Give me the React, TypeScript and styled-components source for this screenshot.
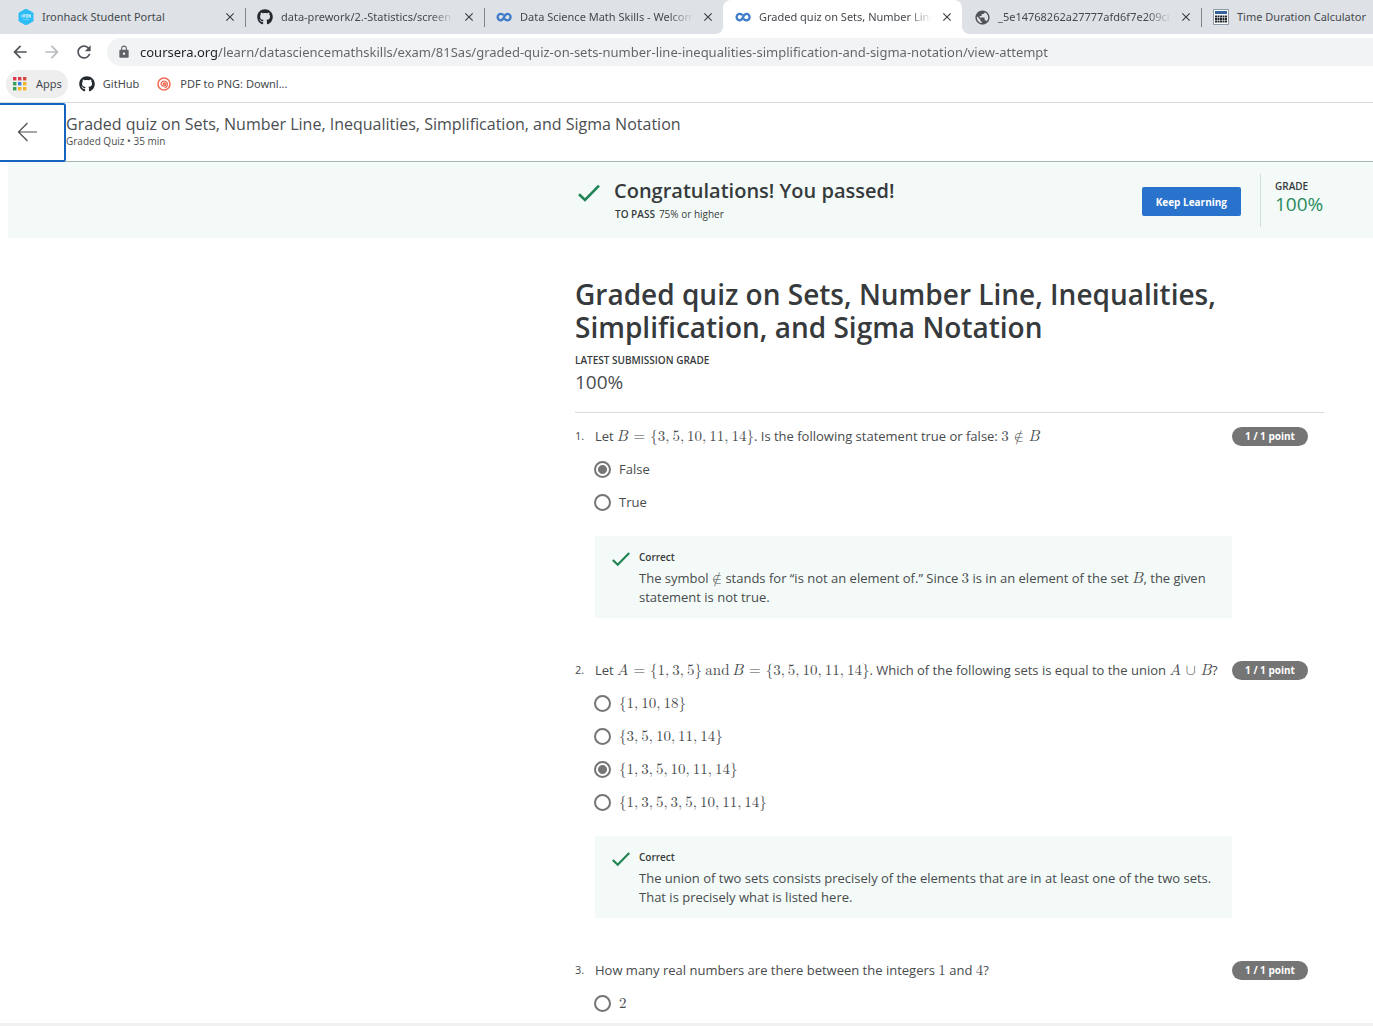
import React from "react";
import styled, { createGlobalStyle, css } from "styled-components";
import { MdArrowBack, MdArrowForward, MdClose, MdLock, MdPublic, MdRefresh } from "react-icons/md";
import { FaGithub } from "react-icons/fa";

const GlobalStyle = createGlobalStyle`
  *, *::before, *::after { box-sizing: border-box; }
  body {
    margin: 0;
    background: #fff;
    color: #373a3c;
    font: 400 13px/19px "Open Sans", "Noto Sans", sans-serif;
  }
  h1, h2, p { margin: 0; }
  button, input { font: inherit; color: inherit; }
  svg { flex: none; }
`;

const Page = styled.div`
  display: flex;
  flex-direction: column;
  min-height: 100vh;
  overflow-x: hidden;
`;

/* ---------- browser chrome ---------- */

const TabStrip = styled.div`
  display: flex;
  height: 34px;
  padding-left: 6px;
  overflow: hidden;
  background: #dee1e6;
`;

const Tab = styled.div<{ $active?: boolean; $divided?: boolean }>`
  position: relative;
  display: flex;
  flex: none;
  align-items: center;
  width: 239px;
  height: 34px;
  padding: 0 8px 0 12px;
  color: #45494d;
  font: 400 11px/16px "Noto Sans", "Open Sans", sans-serif;

  ${(p) =>
    p.$divided &&
    css`
      &::before {
        position: absolute;
        left: 0;
        top: 8px;
        width: 1px;
        height: 19px;
        background: #808488;
        content: "";
      }
    `}

  ${(p) =>
    p.$active &&
    css`
      border-radius: 8px 8px 0 0;
      background: #fff;

      &::before,
      &::after {
        position: absolute;
        bottom: 0;
        width: 8px;
        height: 8px;
        content: "";
      }
      &::before {
        right: 100%;
        background: radial-gradient(circle at 0 0, transparent 8px, #fff 8px);
      }
      &::after {
        left: 100%;
        background: radial-gradient(circle at 100% 0, transparent 8px, #fff 8px);
      }
    `}
`;

const TabIcon = styled.span`
  display: flex;
  flex: none;
  width: 16px;
  margin-right: 8px;
`;

const TabTitle = styled.span<{ $fade?: boolean }>`
  flex: 1;
  min-width: 0;
  margin-right: 8px;
  overflow: hidden;
  white-space: nowrap;
  ${(p) => p.$fade && css`mask-image: linear-gradient(to left, transparent, #000 24px);`}
`;

const IconButton = styled.button<{ $size: number; $color?: string }>`
  display: flex;
  flex: none;
  align-items: center;
  justify-content: center;
  width: ${(p) => p.$size}px;
  height: ${(p) => p.$size}px;
  padding: 0;
  border: 0;
  background: none;
  color: ${(p) => p.$color ?? "#505357"};
`;

const Toolbar = styled.div`
  display: flex;
  align-items: center;
  gap: 12px;
  height: 36px;
  padding-left: 10px;
`;

const AddressBar = styled.label`
  display: flex;
  flex: 1;
  align-items: center;
  gap: 9px;
  height: 28px;
  margin-left: 1px;
  padding-left: 10px;
  border-radius: 14px 0 0 14px;
  background: #f1f3f4;
  color: #5f6368;
`;

const AddressInput = styled.input`
  flex: 1;
  min-width: 0;
  padding: 0;
  border: 0;
  outline: 0;
  background: linear-gradient(to right, #202124 77px, #5f6368 77px);
  background-clip: text;
  -webkit-text-fill-color: transparent;
  font: 400 13px/20px "Noto Sans", "Open Sans", sans-serif;
`;

const Bookmarks = styled.nav`
  display: flex;
  align-items: center;
  gap: 5px;
  height: 33px;
  padding: 0 6px 4px;
  border-bottom: 1px solid #d9dbde;
`;

const Bookmark = styled.a<{ $pill?: boolean }>`
  display: flex;
  align-items: center;
  gap: 8px;
  height: 28px;
  padding: 0 6px;
  border-radius: 14px;
  background: ${(p) => (p.$pill ? "#eeeeee" : "none")};
  color: #45494d;
  font: 400 11px/16px "Noto Sans", "Open Sans", sans-serif;
  text-decoration: none;
`;

/* ---------- page header ---------- */

const Header = styled.header`
  display: flex;
  height: 59px;
  border-bottom: 1px solid #a5b9b1;
`;

const BackButton = styled.button`
  display: flex;
  align-items: center;
  width: 66px;
  height: 59px;
  padding: 0 0 2px 17px;
  border: 2px solid #1564bd;
  border-left: 0;
  border-radius: 0 3px 3px 0;
  background: #fff;
`;

const HeaderTitle = styled.div`
  padding-top: 11px;
  font: 400 16px/20px "Open Sans", sans-serif;
  color: #4b4e50;
`;

const HeaderMeta = styled.div`
  font: 400 10px/15px "Open Sans", sans-serif;
  color: #4b4e50;
`;

/* ---------- result banner ---------- */

const Banner = styled.section`
  display: flex;
  align-items: center;
  height: 76px;
  margin-left: 8px;
  padding: 0 49px 0 570px;
  background: #f3faf8;
`;

const BannerText = styled.div`
  display: grid;
  flex: 1;
  grid-template-columns: 22px 1fr;
  column-gap: 14px;
  align-items: end;
  padding-bottom: 2px;
`;

const BannerTitle = styled.h2`
  font: 600 20px/26px "Open Sans", sans-serif;
`;

const SmallLabel = styled.span`
  font: 600 10px/14px "Open Sans", sans-serif;
`;

const PassLine = styled.p`
  display: flex;
  grid-column: 2;
  gap: 4px;
  margin: 3px 0 0 1px;
  font: 400 10px/14px "Open Sans", sans-serif;
`;

const KeepLearning = styled.button`
  height: 29px;
  padding: 0 14px;
  margin: 3px 19px 0 0;
  border: 0;
  border-radius: 2px;
  background: #2a73cc;
  color: #fff;
  font: 700 10px/14px "Open Sans", sans-serif;
`;

const GradeBox = styled.div`
  display: flex;
  flex-direction: column;
  width: 64px;
  height: 53px;
  padding: 5px 0 0 14px;
  border-left: 1px solid #d5dedb;
`;

const Score = styled.span<{ $green?: boolean }>`
  color: ${(p) => (p.$green ? "#2a8a5e" : "#4b4e50")};
  font: 400 19px/22px "Open Sans", sans-serif;
`;

/* ---------- quiz ---------- */

const Quiz = styled.main`
  flex: 1;
  padding: 40px 49px 3px 575px;
`;

const QuizTitle = styled.h1`
  font: 600 28px/33px "Open Sans", sans-serif;
`;

const Submission = styled.div`
  display: flex;
  flex-direction: column;
  gap: 4px;
  padding: 9px 0 19px;
  border-bottom: 1px solid #dcdcdc;
`;

const QuestionList = styled.ol`
  display: flex;
  flex-direction: column;
  gap: 42px;
  margin: 0;
  padding: 13px 0 0;
  list-style: none;
`;

const Question = styled.li`
  display: grid;
  grid-template-columns: 20px 1fr 92px;
  align-items: start;
  color: #484b4d;
`;

const QuestionNumber = styled.span`
  font: 400 11px/19px "Open Sans", sans-serif;
`;

const QuestionBody = styled.fieldset`
  min-width: 0;
  margin: 0;
  padding: 0;
  border: 0;
`;

const Prompt = styled.legend`
  height: 20px;
  margin-bottom: 7px;
  padding: 0;
  line-height: 20px;
  white-space: nowrap;
`;

const Points = styled.span`
  justify-self: start;
  width: 76px;
  height: 19px;
  margin-top: 1px;
  border-radius: 10px;
  background: #757575;
  color: #fff;
  font: 700 10px/19px "Open Sans", sans-serif;
  text-align: center;
`;

const Option = styled.label`
  display: flex;
  align-items: center;
  gap: 8px;
  height: 33px;
  margin-left: -1px;
`;

const Radio = styled.input`
  appearance: none;
  width: 17px;
  height: 17px;
  margin: 0;
  border: 2px solid #757575;
  border-radius: 50%;
  background: #fff;

  &:checked {
    background: radial-gradient(circle, #757575 4px, #fff 5px);
  }
`;

const Feedback = styled.div`
  display: flex;
  gap: 9px;
  margin-top: 17px;
  padding: 14px 17px 11px;
  background: #f3faf8;
`;

const FeedbackTitle = styled(SmallLabel)`
  display: block;
  margin-bottom: 5px;
  color: #373a3c;
`;

const BottomEdge = styled.footer`
  height: 3px;
  background: #f0f0f0;
`;

/* ---------- maths ---------- */

const Formula = styled.span`
  font: 400 15px/19px "Latin Modern Math", "STIX Two Math", "Liberation Serif", serif;
  white-space: nowrap;
`;

const Comma = styled.span`
  margin-right: 3px;
`;

const Relation = styled.span`
  margin: 0 5px;
`;

const Var = styled.i`
  font-style: normal;
  text-transform: math-auto;
`;

const SetOf = ({ items }: { items: number[] }) => (
  <Formula>
    {"{"}
    {items.map((n, i) => (
      <React.Fragment key={i}>
        {n}
        {i < items.length - 1 && <Comma>,</Comma>}
      </React.Fragment>
    ))}
    {"}"}
  </Formula>
);

/* ---------- drawings ---------- */

const Check = ({ size }: { size: number }) => (
  <svg width={size} height={size} viewBox="0 0 22 22" fill="none" stroke="#1f8354" strokeWidth="2.6">
    <path d="M1 12.2 7 18 21 3.6" />
  </svg>
);

const IronhackLogo = () => (
  <svg width="16" height="16" viewBox="0 0 16 16">
    <path d="M8 0l7 4v8l-7 4-7-4V4z" fill="#2dbdf5" stroke="#2dbdf5" strokeLinejoin="round" />
    <path d="M4 5.5v3M5.6 8.500v-3h1.400v1.500h-1l1 1.500M8.400 5.500h1.400v3H8.400zM11 8.500v-3l1.500 3v-3" fill="none" stroke="#d9f4ff" strokeWidth=".8" />
    <path d="M5 10.500h6" stroke="#8adcfa" strokeWidth=".7" />
  </svg>
);

const CourseraLogo = () => (
  <svg width="16" height="16" viewBox="0 0 16 16" fill="none" stroke="#3f7cc9" strokeWidth="2.300">
    <path d="M7.700 6.100C6.900 5.300 5.900 4.900 4.800 4.900a3.200 3.200 0 0 0 0 6.400c3.400 0 3-6.400 6.600-6.400a3.200 3.200 0 0 1 0 6.400c-1.200 0-2.200-.6-2.900-1.500" />
  </svg>
);

const CalculatorLogo = () => (
  <svg width="16" height="16" viewBox="0 0 16 16">
    <path d="M.5.5h15v15H.5z" fill="#fff" stroke="#8b99a6" />
    <path d="M2 2h12v3H2z" fill="#33619b" />
    {[6.5, 9, 11.5].map((y) =>
      [2, 4.5, 7, 9.5, 12].map((x) => <rect key={`${x}-${y}`} x={x} y={y} width="2" height="2" fill="#20262c" />)
    )}
  </svg>
);

const appColors = ["#d93a4a", "#d93a4a", "#d8453e", "#35a05a", "#3b7de0", "#f0b32a", "#35a05a", "#f0b32a", "#f0b32a"];

const AppsLogo = () => (
  <svg width="16" height="14" viewBox="0 0 16 14">
    {appColors.map((c, i) => (
      <rect key={i} x={1 + (i % 3) * 5} y={((i - (i % 3)) / 3) * 5} width="3.400" height="3.400" fill={c} />
    ))}
  </svg>
);

const SpiralLogo = () => (
  <svg width="16" height="14" viewBox="-1 0 16 14" fill="none" stroke="#ee6d56" strokeLinecap="round">
    <circle cx="7" cy="7" r="6" strokeWidth="1.600" />
    <path d="M7 7.300c-.8 0-1-1.200.2-1.300 1.600 0 2 2.200.3 2.900-2.100.7-3.900-1.200-3.200-3 .9-2.200 4.300-2.300 5.600-.3 1.100 2 .2 4.300-1.700 5.100" strokeWidth="1.400" />
  </svg>
);

const BackArrow = () => (
  <svg width="20" height="20" viewBox="0 0 20 20" fill="none" stroke="#4b4e50" strokeWidth="1.200">
    <path d="M20 10H1.500M10.500 1 1.500 10l9 9" />
  </svg>
);

/* ---------- data ---------- */

type TabData = { title: string; icon: React.ReactNode; active?: boolean; divided?: boolean };

const tabs: TabData[] = [
  { title: "Ironhack Student Portal", icon: <IronhackLogo /> },
  { title: "data-prework/2.-Statistics/screen", icon: <FaGithub size={16} color="#24292e" />, divided: true },
  { title: "Data Science Math Skills - Welcom", icon: <CourseraLogo />, divided: true },
  { title: "Graded quiz on Sets, Number Line", icon: <CourseraLogo />, active: true },
  { title: "_5e14768262a27777afd6f7e209cb", icon: <MdPublic size={17} color="#505357" /> },
  { title: "Time Duration Calculator", icon: <CalculatorLogo />, divided: true },
];

type QuestionData = {
  prompt: React.ReactNode;
  options: { label: React.ReactNode; checked?: boolean }[];
  feedback?: React.ReactNode;
};

const questions: QuestionData[] = [
  {
    prompt: (
      <>
        Let <Formula><Var>B</Var><Relation>=</Relation></Formula>
        <SetOf items={[3, 5, 10, 11, 14]} />. Is the following statement true or false:{" "}
        <Formula>3<Relation>∉</Relation><Var>B</Var></Formula>
      </>
    ),
    options: [{ label: "False", checked: true }, { label: "True" }],
    feedback: (
      <>
        The symbol <Formula>∉</Formula> stands for “is not an element of.” Since <Formula>3</Formula> is in an element
        of the set <Formula><Var>B</Var></Formula>, the given statement is not true.
      </>
    ),
  },
  {
    prompt: (
      <>
        Let <Formula><Var>A</Var><Relation>=</Relation></Formula>
        <SetOf items={[1, 3, 5]} /> <Formula>and{"\u2009"}<Var>B</Var><Relation>=</Relation></Formula>
        <SetOf items={[3, 5, 10, 11, 14]} />. Which of the following sets is equal to the union{" "}
        <Formula><Var>A</Var> ∪ <Var>B</Var></Formula>?
      </>
    ),
    options: [
      { label: <SetOf items={[1, 10, 18]} /> },
      { label: <SetOf items={[3, 5, 10, 11, 14]} /> },
      { label: <SetOf items={[1, 3, 5, 10, 11, 14]} />, checked: true },
      { label: <SetOf items={[1, 3, 5, 3, 5, 10, 11, 14]} /> },
    ],
    feedback:
      "The union of two sets consists precisely of the elements that are in at least one of the two sets. That is precisely what is listed here.",
  },
  {
    prompt: (
      <>
        How many real numbers are there between the integers <Formula>1</Formula> and <Formula>4</Formula>?
      </>
    ),
    options: [{ label: <Formula>2</Formula> }],
  },
];

export default function App() {
  return (
    <Page>
      <GlobalStyle />
      <TabStrip>
        {tabs.map((t, i) => (
          <Tab key={t.title} $active={t.active} $divided={t.divided}>
            <TabIcon>{t.icon}</TabIcon>
            <TabTitle $fade={i > 0 && i < tabs.length - 1}>{t.title}</TabTitle>
            {i < tabs.length - 1 && (
              <IconButton $size={14} $color="#3c4043" aria-label="Close tab">
                <MdClose size={14} />
              </IconButton>
            )}
          </Tab>
        ))}
      </TabStrip>
      <Toolbar>
        <IconButton $size={20} aria-label="Back"><MdArrowBack size={20} /></IconButton>
        <IconButton $size={20} $color="#b9bcbf" aria-label="Forward"><MdArrowForward size={20} /></IconButton>
        <IconButton $size={20} aria-label="Reload"><MdRefresh size={20} /></IconButton>
        <AddressBar>
          <MdLock size={14} />
          <AddressInput
            aria-label="Address"
            defaultValue="coursera.org/learn/datasciencemathskills/exam/81Sas/graded-quiz-on-sets-number-line-inequalities-simplification-and-sigma-notation/view-attempt"
          />
        </AddressBar>
      </Toolbar>
      <Bookmarks>
        <Bookmark $pill href="#apps"><AppsLogo />Apps</Bookmark>
        <Bookmark href="#github"><FaGithub size={16} color="#24292e" />GitHub</Bookmark>
        <Bookmark href="#pdf"><SpiralLogo />PDF to PNG: Downl...</Bookmark>
      </Bookmarks>

      <Header>
        <BackButton aria-label="Back to course"><BackArrow /></BackButton>
        <div>
          <HeaderTitle>Graded quiz on Sets, Number Line, Inequalities, Simplification, and Sigma Notation</HeaderTitle>
          <HeaderMeta>Graded Quiz • 35 min</HeaderMeta>
        </div>
      </Header>

      <Banner>
        <BannerText>
          <Check size={22} />
          <BannerTitle>Congratulations! You passed!</BannerTitle>
          <PassLine><SmallLabel>TO PASS</SmallLabel>75% or higher</PassLine>
        </BannerText>
        <KeepLearning>Keep Learning</KeepLearning>
        <GradeBox>
          <SmallLabel>GRADE</SmallLabel>
          <Score $green>100%</Score>
        </GradeBox>
      </Banner>

      <Quiz>
        <QuizTitle>Graded quiz on Sets, Number Line, Inequalities, Simplification, and Sigma Notation</QuizTitle>
        <Submission>
          <SmallLabel>LATEST SUBMISSION GRADE</SmallLabel>
          <Score>100%</Score>
        </Submission>
        <QuestionList>
          {questions.map((q, i) => (
            <Question key={i}>
              <QuestionNumber>{i + 1}.</QuestionNumber>
              <QuestionBody>
                <Prompt>{q.prompt}</Prompt>
                {q.options.map((o, j) => (
                  <Option key={j}>
                    <Radio type="radio" name={`question-${i}`} defaultChecked={o.checked} />
                    <span>{o.label}</span>
                  </Option>
                ))}
                {q.feedback && (
                  <Feedback>
                    <Check size={18} />
                    <div>
                      <FeedbackTitle>Correct</FeedbackTitle>
                      <p>{q.feedback}</p>
                    </div>
                  </Feedback>
                )}
              </QuestionBody>
              <Points>1 / 1 point</Points>
            </Question>
          ))}
        </QuestionList>
      </Quiz>
      <BottomEdge />
    </Page>
  );
}
